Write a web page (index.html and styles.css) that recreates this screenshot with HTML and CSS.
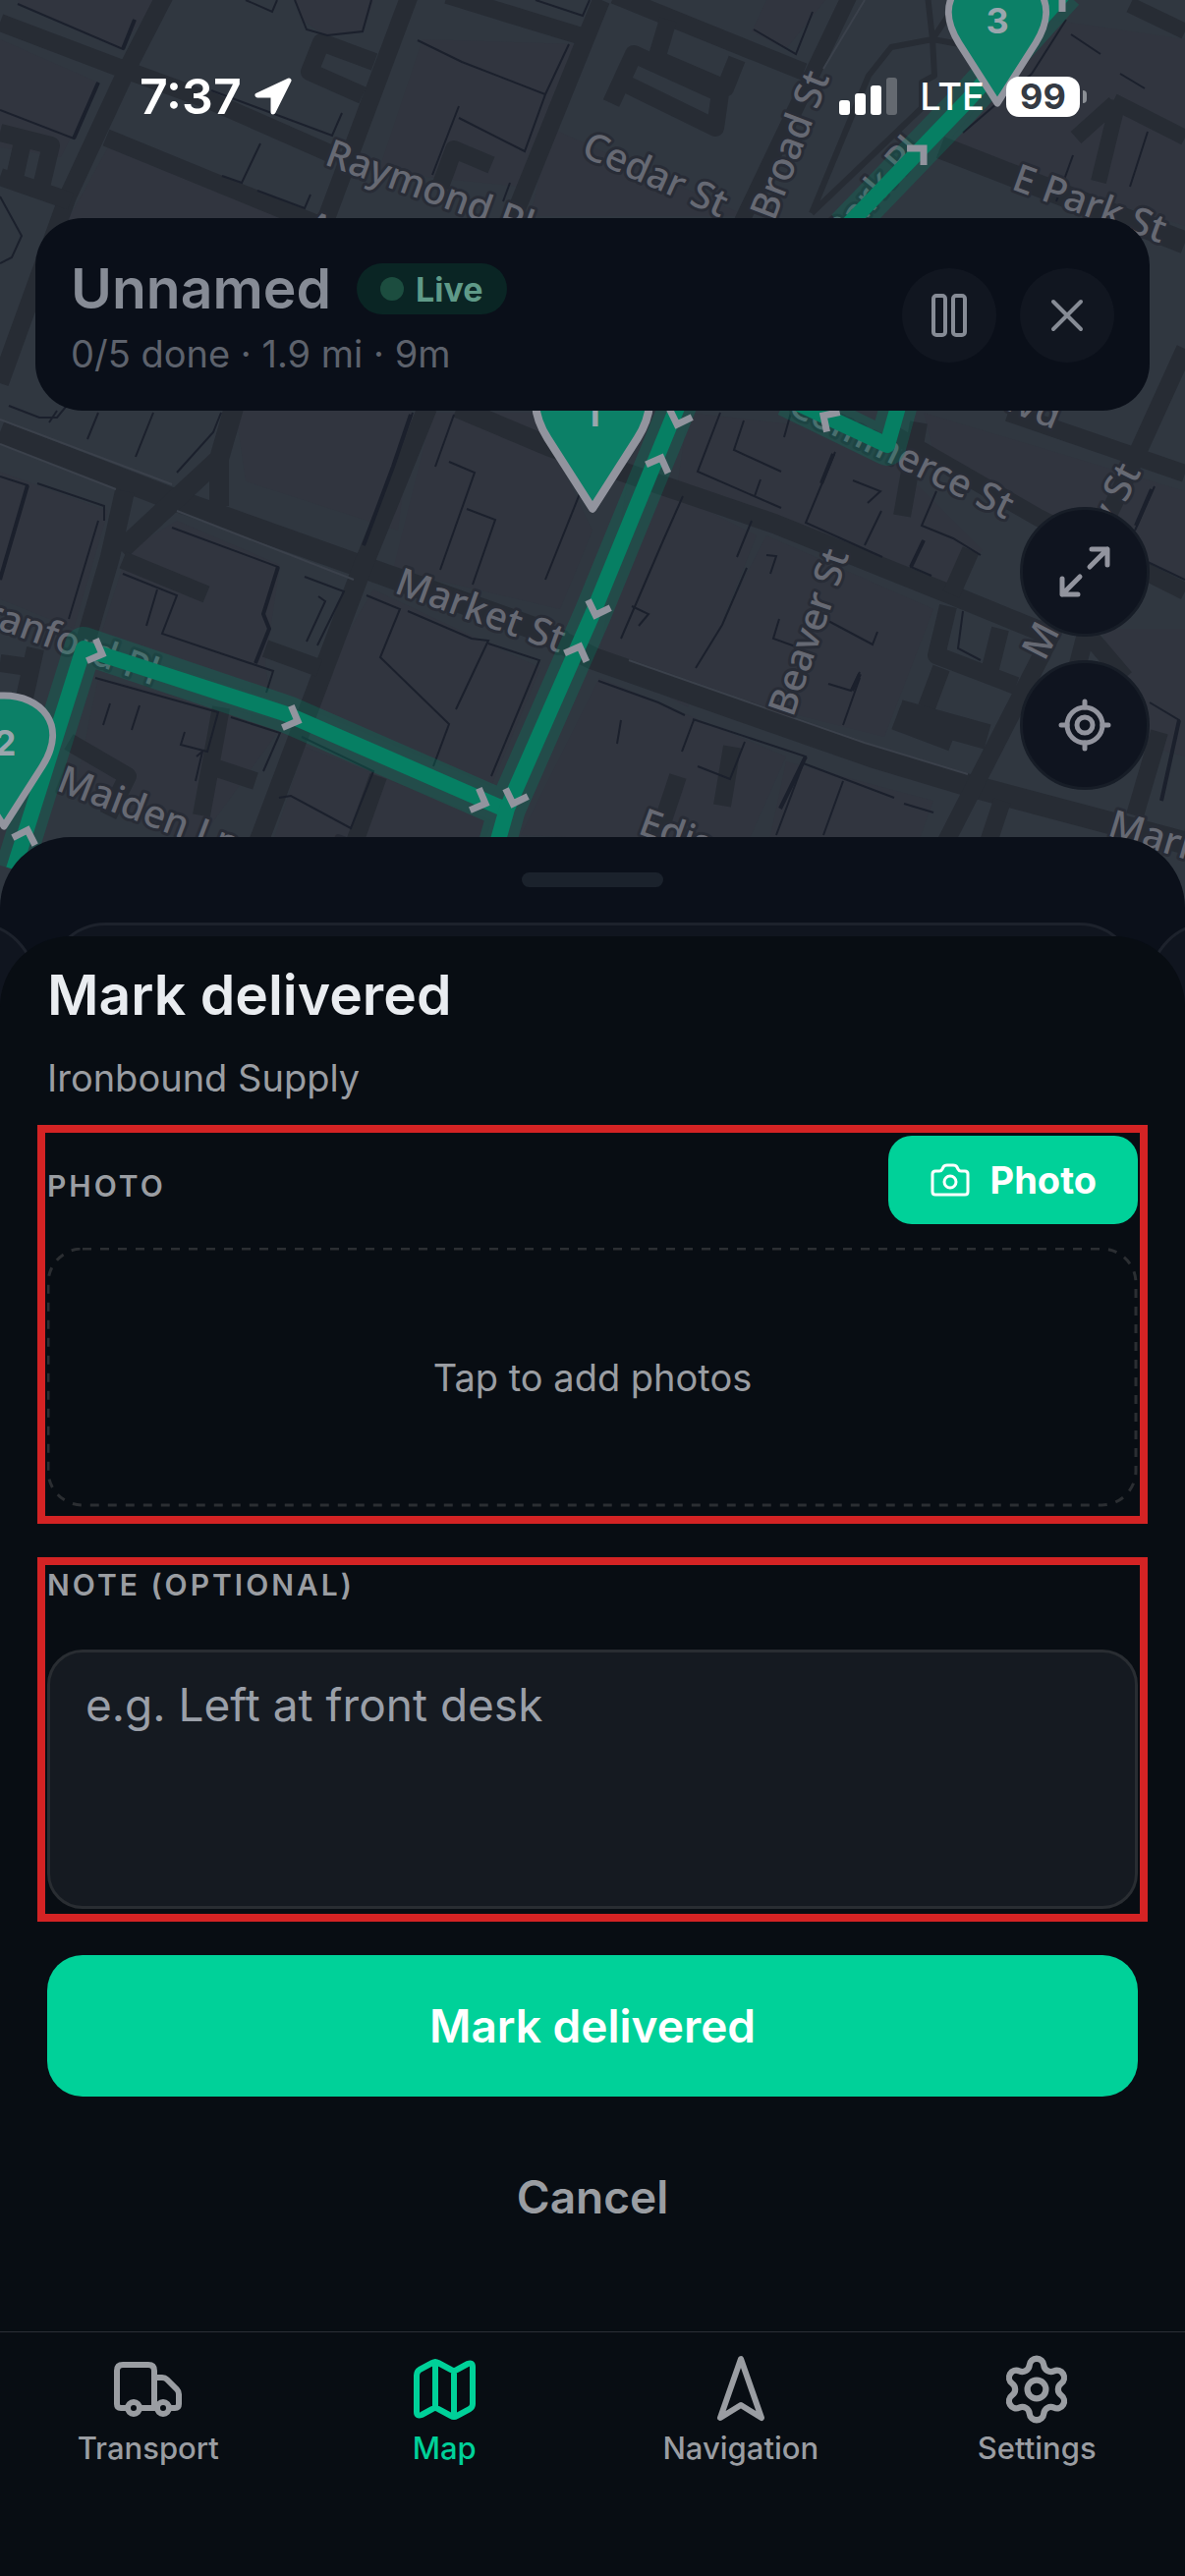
FILE: index.html
```html
<!DOCTYPE html>
<html lang="en">
<head>
<meta charset="utf-8">
<meta name="viewport" content="width=device-width, initial-scale=1">
<title>Mark delivered</title>
<link rel="stylesheet" href="styles.css">
</head>
<body>
<div class="screen">
  <svg class="map" viewBox="0 0 1206 960" preserveAspectRatio="xMidYMin slice" aria-hidden="true">
    <defs>
      <path id="chevron" d="M-12 -12 L0 0 L-12 12" fill="none" stroke="#92949e" stroke-width="7"/>
      <path id="pin" d="M0 86 L-39 25 C-66 -18 -37 -47 0 -47 C37 -47 66 -18 39 25 Z" fill="#0c8067" stroke="#92949e" stroke-width="7" stroke-linejoin="round"/>
    </defs>
    <rect width="1206" height="960" fill="#303740"/>

    <!-- city blocks -->
    <g fill="#31353f">
      <path d="M0 40 L100 84 L62 160 L0 150Z M18 0 L160 0 L122 50 L20 5Z M110 150 L320 235 L300 300 L60 240Z M385 175 L430 40 L585 45 L530 190Z M560 130 L760 220 L540 220Z M300 0 L380 0 L370 32 L330 36 L308 20Z"/>
      <path d="M170 250 L420 420 L405 540 L250 490 L240 420 L100 400Z M0 480 L110 520 L75 640 L0 610Z M130 560 L180 530 L285 575 L270 675 L275 710 L100 655Z M440 420 L545 420 L603 540 L570 620 L400 580Z M380 600 L550 680 L500 800 L310 720Z"/>
      <path d="M100 690 L290 735 L200 860 L75 810Z M310 760 L500 835 L480 900 L270 880Z M640 480 L770 545 L700 720 L610 670Z M780 545 L950 620 L900 750 L700 700Z M700 420 L880 440 L1000 560 L960 600 L690 490Z"/>
      <path d="M610 690 L800 770 L760 860 L530 850Z M800 775 L950 815 L930 870 L780 870Z M940 420 L1206 500 L1206 590 L1060 520 L950 460Z M1120 640 L1206 640 L1206 770 L1170 760Z M780 0 L840 0 L800 50 L765 32Z M1070 20 L1206 40 L1206 230 L960 150Z"/>
    </g>

    <!-- streets -->
    <g fill="none" stroke="#272c34" stroke-width="18" stroke-linejoin="round">
      <path d="M0 23 L119 68 L215 103 L340 158 M168 -5 L131 67 L69 200 L0 390 M108 140 L340 235 M417 -5 L331 225 M612 0 L523 220 M455 -5 L592 37 M625 -5 L818 73"/>
      <path d="M381 63 L327 43 L315 73 L369 97 M0 135 L52 148 L42 190 M0 180 L72 205 M24 140 L14 185 M448 190 L462 152 L500 168"/>
      <path d="M680 20 L668 60 L738 90 L750 60 M622 105 L645 55 L733 95 L728 130 L636 85"/>
      <path d="M865 -5 L755 225 M1133 103 L1206 140 M1138 103 L1118 185 M1150 5 L1206 32 M1095 140 L1134 105" stroke-width="16"/>
      <path d="M957 150 L1206 247 M0 440 L173 507 L369 577 L545 640 L603 670 L888 770 L988 800 L1206 858" stroke-width="23"/>
      <path d="M435 415 L369 577 L262 860 M238 415 L223 467 L223 515 M223 467 L123 560 M127 500 L112 567 L85 660 M465 415 L560 455 L788 533 L972 607 L1065 645" stroke-width="20"/>
      <path d="M36 660 L25 710 M270 660 L325 680 M0 675 L36 680 M125 570 L210 605 M225 720 L205 830 M70 755 L130 790 L110 830 M385 790 L360 860 M215 780 L260 795"/>
      <path d="M1206 355 L1149 480 L1060 667 L961 860 M1026 420 L1206 482 M911 443 L1057 527 L1206 602 M965 617 L953 667 L1034 698 M1018 640 L1008 680 M958 680 L943 720 M988 560 L968 605 M1111 650 L1145 690 M1105 645 L1096 680 M935 430 L918 525 M1020 815 L1005 860 M1180 745 L1155 830 M745 760 L735 820 M690 790 L670 850"/>
      <path d="M915 725 L1005 750 M912 730 L970 752" stroke-width="26"/>
      <path d="M944 -5 L949 40 L951 77 L938 84 L938 110 L826 217 M988 47 L949 40 L907 48 L884 77 L826 217 M949 40 L965 16" stroke-width="6"/>
    </g>

    <!-- building edges -->
    <g fill="none" stroke="#1b202c" stroke-width="2">
      <path d="M18 4 L125 50 L137 20 M0 112 L75 141 L100 84 M0 200 L22 240 L12 262 L0 268 M300 0 L312 30 L333 36 L369 32 L378 0 M215 92 L338 138 L348 115 M265 146 L246 186 L226 179 M262 194 L310 212 L316 198"/>
      <path d="M425 41 L470 63 L555 96 L534 154 L467 120 M579 45 L555 96 M467 108 L440 178 M519 186 L512 205 M250 0 L277 12 L282 0 M767 30 L810 55 L827 12 M545 0 L593 16 L600 0 M1092 158 L1075 205 M1168 134 L1150 190 M1085 20 L1050 75 L980 135 M1090 35 L1120 55 M1140 75 L1165 90"/>
      <path d="M9 413 L40 425 L58 425 L76 403 M50 430 L58 418 M89 447 L100 420 M138 465 L156 420 M180 481 L217 440 L225 420 M0 485 L28 494 L0 590 M38 492 L106 515 L106 530 M100 530 L70 630 M175 537 L283 577 L268 625 L274 640 L260 675 M125 584 L180 606 L165 645 L278 683 L271 705 M160 600 L149 637"/>
      <path d="M420 420 L400 475 L370 555 M462 422 L443 475 M457 470 L483 481 L448 580 M475 518 L504 529 L481 595 M310 587 L350 602 L323 657 M324 607 L331 612 L312 653 M373 606 L407 620 L387 669 L457 737 L441 780 M415 622 L480 650 L497 652 L464 722 M497 655 L549 672 L500 790"/>
      <path d="M97 690 L222 725 L211 765 L184 758 L188 745 M112 716 L105 738 M142 718 L134 743 M200 770 L206 765 L199 795 M235 730 L285 746 L268 785 M307 750 L380 785 L357 843 L296 810 L284 812 M555 590 L603 470"/>
      <path d="M733 420 L710 480 L795 517 M757 428 L747 458 L795 480 M805 420 L798 445 M850 460 L820 532 L898 567 M868 489 L896 500 L883 512 M774 488 L768 505 M897 520 L880 555 M695 505 L675 550 L632 650 M765 530 L750 567 M760 578 L735 636 L708 680 M780 565 L790 566 L784 584 M953 500 L938 535 L970 548 L998 565 M940 550 L927 577 L948 586"/>
      <path d="M643 617 L660 625 L650 637 M793 630 L787 650 L815 660 M843 632 L888 656 L893 643 M875 684 L866 703 L843 696 M875 690 L858 738 M980 622 L975 660 L998 672 M609 693 L670 715 L697 728 M632 733 L628 757 M705 732 L820 770 L790 850 M706 733 L694 765 M758 755 L743 793 L710 780 M815 776 L910 812 M920 818 L950 827 M858 795 L838 850 M1175 495 L1155 540 M1168 572 L1206 590 M1170 715 L1200 733 L1182 815"/>
    </g>
    <g fill="none" stroke="#1b202c" stroke-width="4">
      <path d="M125 50 L137 20 M75 141 L100 84 M28 494 L0 590 M418 422 L400 475 L370 555 M283 577 L268 625 L274 640 L260 675 M848 462 L836 492 M1172 498 L1156 535 M1200 733 L1182 815 M875 686 L867 703 M940 550 L927 577 M820 770 L794 823"/>
    </g>
    <g fill="none" stroke="#3b414b" stroke-width="2">
      <path d="M0 427 L175 493 M180 520 L360 590 M640 672 L880 756 L985 788 M0 452 L118 498 M880 0 L838 70"/>
    </g>

    <!-- street names -->
    <g class="street-names">
      <text transform="translate(329 167) rotate(20)">Raymond Pl</text>
      <text transform="translate(590 158) rotate(24)">Cedar St</text>
      <text transform="translate(788 226) rotate(-69)">Broad St</text>
      <text transform="translate(858 252) rotate(-50)">Park Pl</text>
      <text transform="translate(1028 192) rotate(20)">E Park St</text>
      <text transform="translate(800 420) rotate(26)">Commerce St</text>
      <text transform="translate(998 407) rotate(22)">Blvd</text>
      <text transform="translate(1063 674) rotate(-63)">Mulberry St</text>
      <text transform="translate(807 731) rotate(-71)">Beaver St</text>
      <text transform="translate(400 603) rotate(20)">Market St</text>
      <text transform="translate(-42 626) rotate(20)">Branford Pl</text>
      <text transform="translate(56 804) rotate(21)">Maiden Ln</text>
      <text transform="translate(648 848) rotate(20)">Edison Pl</text>
      <text transform="translate(1126 850) rotate(17)">Market St</text>
      <text transform="translate(308 240) rotate(20)">Academy St</text>
      <text transform="translate(334 878) rotate(20)">Treat Pl</text>
    </g>

    <!-- route -->
    <g fill="none" stroke="#067f63" stroke-linejoin="round">
      <g stroke-width="38" opacity=".3">
        <path d="M14 885 L85 657 L292 727 L512 823"/>
        <path d="M500 880 L516 823 L603 625 L691 410"/>
        <path d="M860 232 L984 103 L1084 -8"/>
        <path d="M800 405 L903 455 L918 400"/>
      </g>
      <g stroke-width="16">
        <path d="M14 885 L85 660 L292 727 L512 823"/>
        <path d="M500 880 L516 823 L603 625 L691 410"/>
        <path d="M860 232 L984 103 L1084 -8"/>
        <path d="M800 405 L903 453 L918 400"/>
      </g>
    </g>
    <use href="#chevron" transform="translate(104 666) rotate(22)"/>
    <use href="#chevron" transform="translate(303 734) rotate(22)"/>
    <use href="#chevron" transform="translate(494 818) rotate(22)"/>
    <use href="#chevron" transform="translate(522 818) rotate(109)"/>
    <use href="#chevron" transform="translate(590 658) rotate(-69)"/>
    <use href="#chevron" transform="translate(606 626) rotate(109)"/>
    <use href="#chevron" transform="translate(673 466) rotate(-69)"/>
    <use href="#chevron" transform="translate(689 432) rotate(109)"/>
    <use href="#chevron" transform="translate(838 423) rotate(213)"/>
    <use href="#chevron" transform="translate(940 151) rotate(-45)"/>
    <use href="#chevron" transform="translate(1081 -5) rotate(-45)"/>
    <use href="#chevron" transform="translate(28 845) rotate(-72)"/>

    <!-- stops -->
    <g class="stop-numbers">
      <use href="#pin" transform="translate(1015 19)"/>
      <text x="1015" y="34">3</text>
      <use href="#pin" transform="translate(4 755)"/>
      <text x="5" y="769">2</text>
      <use href="#pin" transform="translate(603 417) scale(1.17)"/>
      <text x="603" y="434">1</text>
    </g>
  </svg>

  <div class="status-bar">
    <div class="status-group">
      <span class="clock">7:37</span>
      <svg width="40" height="40" viewBox="0 0 40 40" aria-hidden="true"><path d="M36 4 L4 19 H20 V36 Z" fill="#fff" stroke="#fff" stroke-width="5" stroke-linejoin="round"/></svg>
    </div>
    <div class="status-group status-right">
      <svg width="60" height="38" viewBox="0 0 60 38" aria-hidden="true"><g fill="#fff"><rect x="0" y="23" width="11" height="15" rx="3"/><rect x="16" y="16" width="11" height="22" rx="3"/><rect x="32" y="8" width="11" height="30" rx="3"/><rect x="48" y="0" width="11" height="38" rx="3" opacity=".25"/></g></svg>
      <span class="carrier">LTE</span>
      <span class="battery">99</span>
    </div>
  </div>

  <header class="trip">
    <div class="trip-info">
      <div class="trip-heading">
        <h2>Unnamed</h2>
        <span class="live">Live</span>
      </div>
      <p>0/5 done · 1.9 mi · 9m</p>
    </div>
    <button class="trip-button" type="button" aria-label="Pause">
      <svg width="48" height="48" viewBox="0 0 48 48"><g fill="none" stroke="currentColor" stroke-width="4"><rect x="8" y="4" width="12" height="40" rx="3"/><rect x="28" y="4" width="12" height="40" rx="3"/></g></svg>
    </button>
    <button class="trip-button" type="button" aria-label="Close">
      <svg width="48" height="48" viewBox="0 0 48 48"><path d="M10 10 L38 38 M38 10 L10 38" fill="none" stroke="currentColor" stroke-width="4" stroke-linecap="round"/></svg>
    </button>
  </header>

  <div class="map-controls">
    <button type="button" aria-label="Fit route">
      <svg width="60" height="60" viewBox="0 0 60 60"><path d="M37 7 H53 V23 M53 7 L35 25 M7 37 V53 H23 M7 53 L25 35" fill="none" stroke="currentColor" stroke-width="5" stroke-linecap="round" stroke-linejoin="round"/></svg>
    </button>
    <button type="button" aria-label="My location">
      <svg width="60" height="60" viewBox="0 0 60 60"><g fill="none" stroke="currentColor" stroke-width="5" stroke-linecap="round"><circle cx="30" cy="30" r="18"/><circle cx="30" cy="30" r="8"/><path d="M30 6 V12 M30 48 V54 M6 30 H12 M48 30 H54"/></g></svg>
    </button>
  </div>

  <div class="stops-sheet">
    <div class="handle"></div>
    <div class="stop-cards"><div></div><div></div><div></div></div>
  </div>

  <form class="delivery">
    <h1>Mark delivered</h1>
    <p class="customer">Ironbound Supply</p>

    <section class="field photo-field">
      <div class="field-head">
        <h3 class="field-label">PHOTO</h3>
        <button class="photo-button" type="button">
          <svg width="42" height="36" viewBox="0 0 42 36" aria-hidden="true"><g fill="none" stroke="currentColor" stroke-width="3" stroke-linejoin="round"><path d="M6 9 H10 Q12 9 13 7 L14 5 Q15 3 18 3 H24 Q27 3 28 5 L29 7 Q30 9 32 9 H36 Q39 9 39 12 V30 Q39 33 36 33 H6 Q3 33 3 30 V12 Q3 9 6 9Z"/><circle cx="21" cy="20" r="6"/></g></svg>
          Photo
        </button>
      </div>
      <button class="dropzone" type="button">
        <svg class="dropzone-outline" aria-hidden="true"><rect x="1" y="1" rx="35"/></svg>
        Tap to add photos
      </button>
    </section>

    <section class="field note-field">
      <label class="field-label" for="note">NOTE (OPTIONAL)</label>
      <textarea id="note" placeholder="e.g. Left at front desk"></textarea>
    </section>

    <button class="submit" type="submit">Mark delivered</button>
    <button class="cancel" type="button">Cancel</button>
  </form>

  <nav class="tabs">
    <a href="#transport">
      <svg width="72" height="72" viewBox="0 0 72 72" aria-hidden="true"><g fill="none" stroke="currentColor" stroke-width="6" stroke-linecap="round" stroke-linejoin="round"><path d="M13 55 H8 Q4 55 4 51 V17 Q4 11 10 11 H36 Q42 11 42 17 V55 M28 55 H43 M42 24 H50 Q53 24 55 26 L65 36 Q67 38 67 41 V51 Q67 55 63 55 H59"/><circle cx="21" cy="55" r="6"/><circle cx="51" cy="55" r="6"/></g></svg>
      Transport
    </a>
    <a class="active" href="#map" aria-current="page">
      <svg width="72" height="72" viewBox="0 0 72 72" aria-hidden="true"><path d="M8 22 Q8 18 11 16 L24 9 Q27 7 30 9 L43 16 Q46 18 49 16 L60 10 Q65 8 65 13 V51 Q65 54 62 56 L49 63 Q46 65 43 63 L30 56 Q27 54 24 56 L13 62 Q8 64 8 59 Z M27 8 V55 M46 17 V64" fill="none" stroke="currentColor" stroke-width="6" stroke-linecap="round" stroke-linejoin="round"/></svg>
      Map
    </a>
    <a href="#navigation">
      <svg width="72" height="72" viewBox="0 0 72 72" aria-hidden="true"><path d="M36 5 L15 65 L36 52 L57 65 Z" fill="none" stroke="currentColor" stroke-width="6" stroke-linejoin="round"/></svg>
      Navigation
    </a>
    <a href="#settings">
      <svg width="72" height="72" viewBox="0.5 0.5 23 23" aria-hidden="true"><g fill="none" stroke="currentColor" stroke-width="2" stroke-linejoin="round"><path d="M9.671 4.136a2.34 2.34 0 0 1 4.659 0 2.34 2.34 0 0 0 3.319 1.915 2.34 2.34 0 0 1 2.33 4.033 2.34 2.34 0 0 0 0 3.831 2.34 2.34 0 0 1-2.33 4.033 2.34 2.34 0 0 0-3.319 1.915 2.34 2.34 0 0 1-4.659 0 2.34 2.34 0 0 0-3.32-1.915 2.34 2.34 0 0 1-2.33-4.033 2.34 2.34 0 0 0 0-3.831A2.34 2.34 0 0 1 6.35 6.051a2.34 2.34 0 0 0 3.319-1.915"/><circle cx="12" cy="12" r="3"/></g></svg>
      Settings
    </a>
  </nav>
</div>
</body>
</html>
```
FILE: styles.css
```css
* {
  box-sizing: border-box;
}

body {
  margin: 0;
  background: #080d13;
  color: #9a9da2;
  font-family: Inter, "Liberation Sans", sans-serif;
}

h1, h2, h3, p {
  margin: 0;
}

button {
  border: 0;
  padding: 0;
  background: none;
  color: inherit;
  font: inherit;
}

svg {
  display: block;
  flex: none;
}

.screen {
  position: relative;
  display: flex;
  flex-direction: column;
  min-height: 100vh;
  overflow: hidden;
}

/* Map behind the interface */
.map {
  position: absolute;
  top: 0;
  left: 0;
  width: 100%;
  height: 960px;
}

.street-names {
  fill: #666973;
  stroke: #282c36;
  stroke-width: 6px;
  stroke-linejoin: round;
  paint-order: stroke;
  font: 500 39px "Noto Sans", sans-serif;
}

.stop-numbers {
  fill: #9aa6ad;
  font-size: 36px;
  font-weight: 700;
  text-anchor: middle;
}

/* Status bar */
.status-bar {
  position: relative;
  display: flex;
  justify-content: space-between;
  align-items: center;
  height: 60px;
  margin: 68px 100px 94px 142px;
  color: #fff;
}

.status-group {
  display: flex;
  align-items: center;
  gap: 12px;
}

.status-right {
  gap: 22px;
}

.clock {
  font-size: 50px;
  font-weight: 600;
}

.carrier {
  font-size: 38px;
  font-weight: 500;
}

.battery {
  position: relative;
  width: 75px;
  margin-right: 7px;
  border-radius: 13px;
  background: #fff;
  color: #343a43;
  font-size: 36px;
  font-weight: 700;
  line-height: 41px;
  text-align: center;
}

.battery::after {
  content: "";
  position: absolute;
  top: 14px;
  right: -7px;
  width: 4px;
  height: 13px;
  border-radius: 0 4px 4px 0;
  background: #8b8f95;
}

/* Trip header */
.trip {
  position: relative;
  display: flex;
  align-items: center;
  gap: 24px;
  margin: 0 36px;
  padding: 36px 36px 34px;
  border-radius: 48px;
  background: #0a0f19;
}

.trip-info {
  display: flex;
  flex: 1;
  flex-direction: column;
  gap: 6px;
}

.trip-heading {
  display: flex;
  align-items: center;
  gap: 26px;
}

.trip h2 {
  color: #868b95;
  font-size: 57px;
  font-weight: 600;
  line-height: 72px;
}

.trip p {
  color: #5d626c;
  font-size: 38px;
  line-height: 48px;
}

.live {
  display: flex;
  align-items: center;
  gap: 12px;
  height: 52px;
  padding: 0 24px;
  border-radius: 26px;
  background: #0a2524;
  color: #5f9a88;
  font-size: 34px;
  font-weight: 700;
}

.live::before {
  content: "";
  width: 24px;
  height: 24px;
  border-radius: 50%;
  background: #1c4d3f;
}

.trip-button {
  display: grid;
  place-items: center;
  width: 96px;
  height: 96px;
  border-radius: 50%;
  background: #111620;
  color: #868b95;
}

.map-controls {
  position: relative;
  display: flex;
  flex-direction: column;
  align-items: flex-end;
  gap: 24px;
  margin: 98px 36px 48px;
}

.map-controls button {
  display: grid;
  place-items: center;
  width: 132px;
  height: 132px;
  border: 3px solid #171d27;
  border-radius: 50%;
  background: #0f141f;
  color: #92949e;
}

/* Stop list sheet, mostly covered by the delivery form */
.stops-sheet {
  position: relative;
  height: 173px;
  padding-top: 36px;
  overflow: hidden;
  border-radius: 72px 72px 0 0;
  background: #0b101a;
}

.handle {
  width: 144px;
  height: 15px;
  margin: 0 auto 36px;
  border-radius: 8px;
  background: #1b222c;
}

.stop-cards {
  display: flex;
  justify-content: center;
  gap: 12px;
}

.stop-cards div {
  flex: 0 0 calc(100% - 96px);
  height: 160px;
  border: 3px solid #1d222c;
  border-radius: 60px;
  background: #10151f;
}

/* Delivery form */
.delivery {
  position: relative;
  display: flex;
  flex-direction: column;
  margin-top: -72px;
  padding: 24px 38px 64px;
  border-radius: 72px 72px 0 0;
  background: #080d13;
}

.delivery h1 {
  padding: 0 10px;
  color: #e9ecf0;
  font-size: 57px;
  font-weight: 600;
  line-height: 72px;
}

.customer {
  margin: 24px 10px;
  font-size: 38px;
  line-height: 48px;
}

.field {
  display: flex;
  flex-direction: column;
  margin-bottom: 34px;
  border: 8px solid #d42324;
}

.photo-field {
  gap: 24px;
  padding: 3px 2px 9px;
}

.note-field {
  gap: 48px;
  padding: 2px 2px 5px;
}

.field-head {
  display: flex;
  justify-content: space-between;
  align-items: center;
}

.field-label {
  font-size: 30px;
  font-weight: 600;
  line-height: 36px;
  letter-spacing: 3px;
}

.field-head .field-label {
  padding-top: 12px;
}

.photo-button {
  display: flex;
  align-items: center;
  gap: 20px;
  height: 90px;
  padding: 0 42px;
  border-radius: 24px;
  background: #00d199;
  color: #fff;
  font-size: 38px;
  font-weight: 700;
}

.dropzone {
  position: relative;
  height: 264px;
  color: #9a9da2;
  font-size: 38px;
}

.dropzone-outline {
  position: absolute;
  inset: 0;
  width: 100%;
  height: 100%;
}

.dropzone-outline rect {
  width: calc(100% - 3px);
  height: calc(100% - 3px);
  fill: none;
  stroke: #2b2e32;
  stroke-width: 3px;
  stroke-dasharray: 9px 9px;
}

textarea {
  display: block;
  width: 100%;
  height: 264px;
  margin: 0;
  padding: 23px 36px;
  border: 3px solid #292d32;
  border-radius: 36px;
  background: #151a21;
  color: #e9ecf0;
  font: 46px/60px Inter, "Liberation Sans", sans-serif;
  resize: none;
}

textarea::placeholder {
  color: #9a9fa8;
  opacity: 1;
}

.submit,
.cancel {
  height: 144px;
  margin: 0 10px;
  border-radius: 36px;
  font-size: 46px;
  font-weight: 600;
}

.submit {
  margin-bottom: 30px;
  background: #00d199;
  color: #fff;
}

/* Tab bar */
.tabs {
  display: grid;
  grid-template-columns: repeat(4, 1fr);
  margin-top: auto;
  padding: 22px 0 112px;
  border-top: 1px solid #2b2f36;
}

.tabs a {
  display: flex;
  flex-direction: column;
  align-items: center;
  gap: 6px;
  color: #9a9da2;
  font-size: 31px;
  font-weight: 500;
  line-height: 36px;
  text-decoration: none;
}

.tabs .active {
  color: #00d199;
}
```
